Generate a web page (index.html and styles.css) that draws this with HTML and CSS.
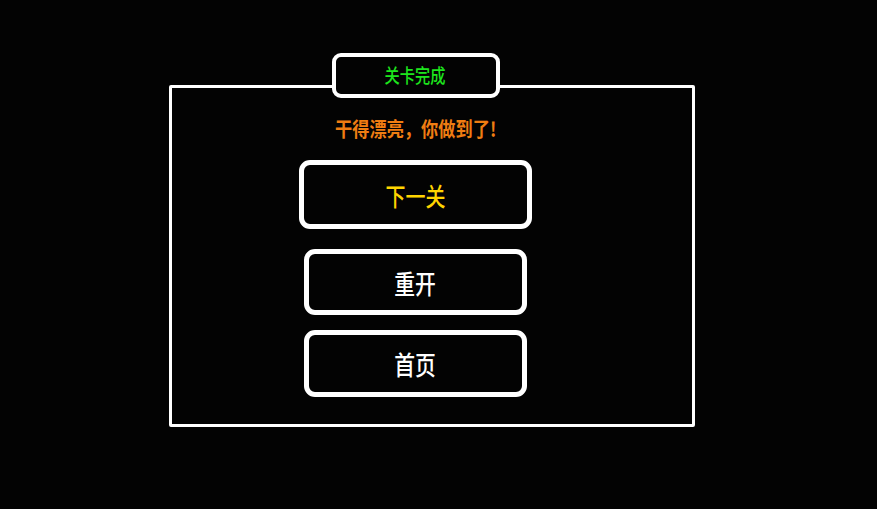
FILE: index.html
```html
<!DOCTYPE html>
<html lang="zh-CN">
<head>
    <meta charset="UTF-8">
    <meta name="viewport" content="width=device-width, initial-scale=1.0">
    <title>关卡完成</title>
    <link rel="stylesheet" href="styles.css">
</head>
<body>
    <div class="panel">
        <div class="tab"><span class="label">关卡完成</span></div>
        <p class="message"><span class="label">干得漂亮，你做到了!</span></p>
        <button class="sketch-button next-button"><span class="label">下一关</span></button>
        <button class="sketch-button restart-button"><span class="label">重开</span></button>
        <button class="sketch-button home-button"><span class="label">首页</span></button>
    </div>
</body>
</html>
```

FILE: styles.css
```css
/* Page */
body {
    margin: 0;
    height: 509px;
    overflow: hidden;
    background-color: #030303;
    font-family: "Noto Sans CJK SC", "Noto Sans", sans-serif;
}
/* narrow, tall lettering */
.label {
    display: inline-block;
    transform: scaleX(0.8);
}
/* Outer frame */
.panel {
    width: 526px;
    height: 342px;
    margin: 85px 0 0 169px;
    padding: 0 33px 0 0;
    box-sizing: border-box;
    border: 3px solid #fff;
    border-radius: 2px;
    display: flex;
    flex-direction: column;
    align-items: center;
}
/* Title tab sitting on the top edge */
.tab {
    width: 168px;
    height: 45px;
    margin-top: -35px;
    box-sizing: border-box;
    border: 4px solid #fff;
    border-radius: 9px;
    background-color: #030303;
    color: #1de61d;
    font-size: 19px;
    font-weight: 500;
    line-height: 36px;
    text-align: center;
}
.message {
    margin: 19px 0 0;
    height: 24px;
    line-height: 24px;
    color: #ef7d12;
    font-size: 20px;
    font-weight: 600;
}
.message .label {
    transform: scaleX(0.86);
}
/* Menu buttons */
.sketch-button {
    width: 223px;
    height: 66px;
    margin-top: 20px;
    padding: 0;
    background: none;
    border: 5px solid #fff;
    border-radius: 11px;
    color: #fff;
    font-family: inherit;
    font-size: 26px;
    font-weight: 500;
    cursor: pointer;
}
.next-button {
    width: 233px;
    height: 69px;
    margin-top: 19px;
    color: #ffd500;
    font-size: 25px;
}
.home-button {
    height: 67px;
    margin-top: 15px;
}
```
